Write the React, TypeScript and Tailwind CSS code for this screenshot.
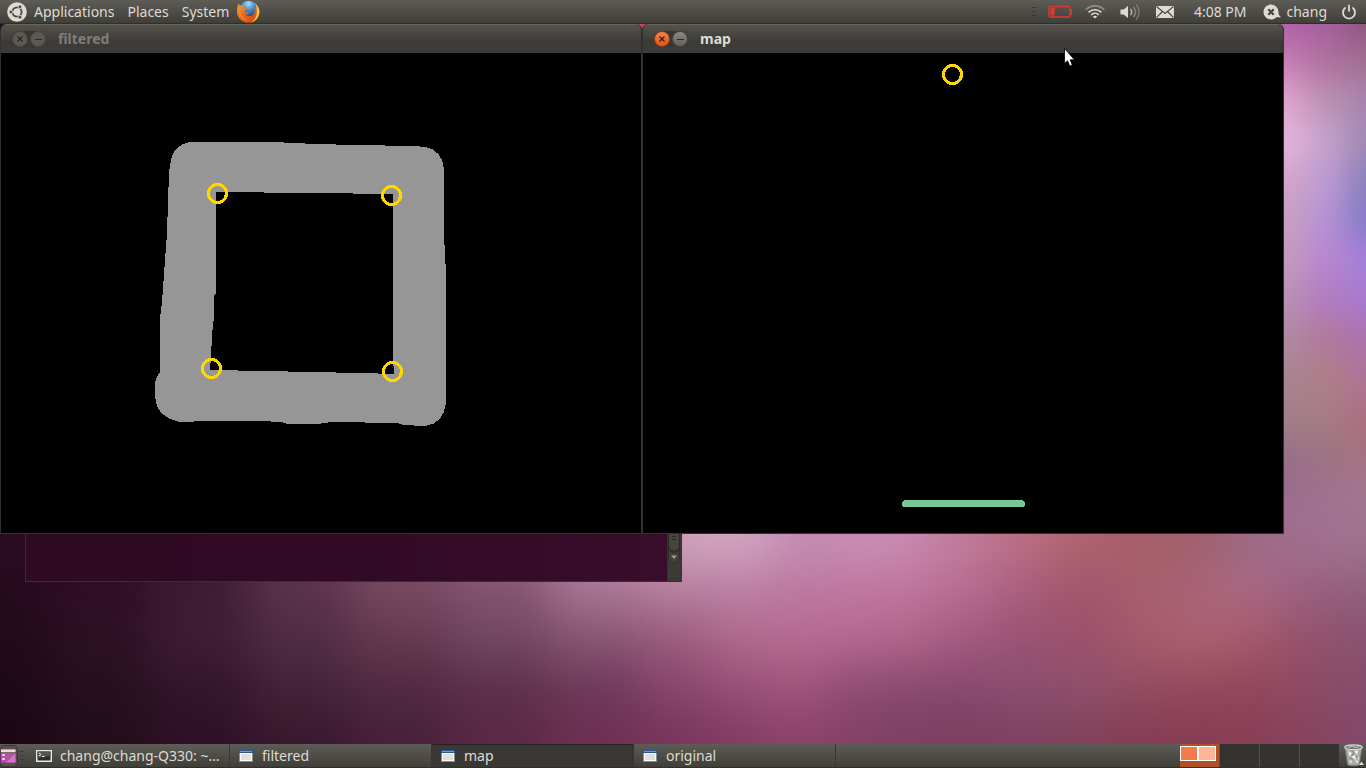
import type { ReactNode } from "react";

type Cell = { x: number; y: number; w: number; h: number; fill: string };

// Wallpaper colours, sampled at the crossing points of xs and ys
const lowerXs = [0, 100, 200, 300, 400, 500, 600, 680, 740, 800, 850, 900, 960, 1020, 1080, 1150, 1200, 1250, 1300, 1366];
const lowerYs = [540, 590, 640, 690, 740];
const lowerColors = [
  "2a0d20 300c24 3d1a33 60364d 805068 97657f c090ad cfa3bb d2a8c3 c48cb2 c88eb7 ca8cb3 c17d9c bb6f86 b0646d a55e68 a0606c 9c6a85 a0708f a07590",
  "260a1d 300d24 3d1c33 5a334b 754860 82526e a67391 b47f9e bd7ea2 bb78a0 bf77a0 c0769c b66d92 aa5f7d a0566c a65f70 a96477 ab6884 9c6080 90607a",
  "220a1a 2c1022 3f1d35 4f2c43 65394f 714762 875472 9c5a7c ae6a8c b76a90 b3688f b2658b a45a80 985273 9c506a a55b6c aa6272 a65a6a 955069 8a5270",
  "1e0717 260f1e 33142a 432337 4f2940 5c2f49 6c3857 87456a 964f75 a0547b 8d4b72 88496b 86486c 8b4e70 8e506c 914c60 96465a 90455a 8d4a63 854c6a",
  "1d0714 240d1a 2e1024 3a172c 46203a 5a2844 6f2f52 78345a 813c63 8b4268 844064 7c4063 7a3f5e 7d4060 804058 843a52 863c54 873e55 87425c 83486a",
];

const rightXs = [1284, 1325, 1366];
const rightYs = [24, 60, 100, 140, 180, 220, 260, 300, 340, 380, 420, 460, 500, 540];
const rightColors = [
  "b05fa8 a5609c 8f5582",
  "c67fb6 b0709f a0708f",
  "dfa6cd bc90b4 a884ae",
  "e6b6dc c6a2cc a288b4",
  "d4a5c8 bd9cd2 8b80bd",
  "c8a0c0 b692d6 857ac8",
  "c49cba b786d0 a580da",
  "ba90b6 b27cc0 a87ad0",
  "b08a9e b2789a ab72ac",
  "a58492 ae8088 b07294",
  "a08088 a57c84 ac7080",
  "986f88 9c7480 a8707e",
  "956a8a 9d7088 a67c90",
  "a0709a a07498 a07d95",
];

function toCells(xs: number[], ys: number[], colors: string[]): Cell[] {
  const edges = (points: number[]) =>
    points.map((p, i) => [
      i === 0 ? p - 60 : (points[i - 1] + p) / 2,
      i === points.length - 1 ? p + 80 : (points[i + 1] + p) / 2,
    ]);
  const xEdges = edges(xs);
  const yEdges = edges(ys);
  return colors.flatMap((row, r) =>
    row.split(" ").map((color, c) => ({
      x: xEdges[c][0],
      y: yEdges[r][0],
      w: xEdges[c][1] - xEdges[c][0] + 1,
      h: yEdges[r][1] - yEdges[r][0] + 1,
      fill: `#${color}`,
    }))
  );
}

const rightCells = toCells(rightXs, rightYs, rightColors);
const lowerCells = toCells(lowerXs, lowerYs, lowerColors);

function Wallpaper() {
  return (
    <svg
      className="absolute inset-0 h-full w-full"
      viewBox="0 24 1366 720"
      preserveAspectRatio="none"
      aria-hidden="true"
    >
      <defs>
        <filter id="soft" filterUnits="userSpaceOnUse" x="-100" y="-100" width="1600" height="1000" colorInterpolationFilters="sRGB">
          <feGaussianBlur stdDeviation="24" />
        </filter>
        <filter id="softRight" filterUnits="userSpaceOnUse" x="1100" y="-100" width="500" height="800" colorInterpolationFilters="sRGB">
          <feGaussianBlur stdDeviation="15" />
        </filter>
      </defs>
      <rect x="0" y="24" width="600" height="520" fill="#2f0a22" />
      <rect x="600" y="24" width="100" height="520" fill="#bf4c58" />
      <rect x="700" y="24" width="666" height="520" fill="#b060a0" />
      <g filter="url(#softRight)">
        {rightCells.map((c) => (
          <rect key={`${c.x}-${c.y}`} x={c.x} y={c.y} width={c.w} height={c.h} fill={c.fill} />
        ))}
      </g>
      <g filter="url(#soft)">
        {lowerCells.map((c) => (
          <rect key={`${c.x}-${c.y}`} x={c.x} y={c.y} width={c.w} height={c.h} fill={c.fill} />
        ))}
      </g>
    </svg>
  );
}

function UbuntuLogo() {
  return (
    <svg width="20" height="20" viewBox="0 0 20 20" aria-hidden="true">
      <circle cx="10" cy="10" r="9.8" fill="#dfdbd2" />
      <circle cx="10" cy="10" r="4.5" fill="none" stroke="#4a4943" strokeWidth="2" />
      <g stroke="#dfdbd2" strokeWidth="1">
        <path d="M10 10H2M10 10L14 3M10 10L14 17" />
      </g>
      <circle cx="10" cy="10" r="3.4" fill="#dfdbd2" />
      <g fill="#4a4943" stroke="#dfdbd2" strokeWidth="0.8">
        <circle cx="4" cy="10" r="1.9" />
        <circle cx="13" cy="4.8" r="1.9" />
        <circle cx="13" cy="15.2" r="1.9" />
      </g>
    </svg>
  );
}

function FirefoxLogo() {
  return (
    <svg width="24" height="24" viewBox="0 0 24 24" aria-hidden="true">
      <defs>
        <radialGradient id="globe" cx="0.5" cy="0.15" r="0.8">
          <stop offset="0" stopColor="#a9dcf5" />
          <stop offset="0.45" stopColor="#3a86cc" />
          <stop offset="1" stopColor="#12316f" />
        </radialGradient>
        <linearGradient id="fox" x1="0" y1="0" x2="1" y2="1">
          <stop offset="0" stopColor="#f3a23a" />
          <stop offset="0.5" stopColor="#e4661b" />
          <stop offset="1" stopColor="#c8400e" />
        </linearGradient>
      </defs>
      <circle cx="12.5" cy="10.5" r="9.8" fill="url(#globe)" />
      <path
        d="M2.6 3.2C2.9 4.6 3.5 5.4 4.4 5.6C5.6 5 7 5 8.4 5.6C7.5 6.4 7.4 7.1 7.8 7.8C8.9 7.7 10.2 7.9 10.9 8.5C10.6 9.5 9.1 10 8.7 10.6C8.6 11.4 9 12 9.7 12.3C10.9 12.5 12.3 11.8 13.5 12.5C13 14.1 11.3 14.7 9.4 14.5C11.3 16.8 15.4 16.8 17.3 14.5C19.2 12.3 19.2 8.6 17.4 6.2C19.3 7 20.2 8.3 20.6 9.8C20.9 7.3 20.1 4.8 18.3 3.1C21.7 5 23.6 8.6 23.4 12.4C23 18.6 18.2 23 12.2 22.8C5.8 22.6 1.1 17.8 1 11.8C1 8.3 1.7 5.4 2.6 3.2Z"
        fill="url(#fox)"
      />
      <path
        d="M20.6 9.8C20.9 7.3 20.1 4.8 18.3 3.1C21.7 5 23.6 8.6 23.4 12.4C23 17.4 19.7 21.2 15.4 22.3C19.6 19.4 21.5 14.5 20.6 9.8Z"
        fill="#f8c440"
      />
      <path d="M3 9C3.4 14.5 6.6 18.8 12 19.8C7.4 20.4 2.9 16.2 3 9Z" fill="#f6a53a" />
    </svg>
  );
}

function BatteryIcon() {
  return (
    <svg width="25" height="14" viewBox="0 0 25 14" aria-hidden="true">
      <rect x="1" y="1.5" width="21" height="10.5" rx="1.5" fill="none" stroke="#df382c" strokeWidth="1.4" />
      <rect x="2.5" y="3" width="4" height="7.5" fill="#df382c" />
      <path d="M22.5 4.5h1v5h-1" fill="none" stroke="#df382c" strokeWidth="1.2" />
    </svg>
  );
}

function WifiIcon() {
  return (
    <svg width="20" height="14" viewBox="0 0 20 14" fill="none" strokeWidth="1.6" aria-hidden="true">
      <path d="M0.8 4.8C6 -0.4 14 -0.4 19.2 4.8" stroke="#908e87" />
      <path d="M3.6 7.4C7.3 3.8 12.7 3.8 16.4 7.4" stroke="#dfdbd2" />
      <path d="M6.2 9.8C8.4 7.7 11.6 7.7 13.8 9.8" stroke="#dfdbd2" />
      <path d="M7.8 11.4C9.1 10.4 10.9 10.4 12.2 11.4L10 13.6Z" fill="#dfdbd2" />
    </svg>
  );
}

function VolumeIcon() {
  return (
    <svg width="20" height="18" viewBox="0 0 20 18" fill="none" strokeWidth="1.5" aria-hidden="true">
      <path d="M0.5 6.5h3.2L8 3v12L3.7 11.5H0.5Z" fill="#dfdbd2" />
      <path d="M10.5 6C12 7.8 12 10.2 10.5 12" stroke="#b5b2aa" />
      <path d="M13.5 4C16 7 16 11 13.5 14" stroke="#88867f" />
      <path d="M16.2 1.5C20 6 20 12 16.2 16.5" stroke="#7a7871" />
    </svg>
  );
}

function MailIcon() {
  return (
    <svg width="18" height="12" viewBox="0 0 18 12" aria-hidden="true">
      <rect width="18" height="12" fill="#dfdbd2" />
      <path d="M0.5 0.5L9 7.5L17.5 0.5M0.5 11.5L6.5 5.5M17.5 11.5L11.5 5.5" fill="none" stroke="#4a4943" strokeWidth="1.1" />
    </svg>
  );
}

function ChatIcon() {
  return (
    <svg width="18" height="16" viewBox="0 0 18 16" aria-hidden="true">
      <path d="M8 0.5A7.5 7.5 0 0 1 15.5 8C15.5 10 16 11.5 17.6 12.5V13.3H13.3A7.5 7.5 0 1 1 8 0.5Z" fill="#dfdbd2" />
      <path d="M5.3 5.3L10.7 10.7M10.7 5.3L5.3 10.7" stroke="#45443f" strokeWidth="2.2" />
    </svg>
  );
}

function PowerIcon() {
  return (
    <svg width="16" height="16" viewBox="0 0 16 16" fill="none" stroke="#dfdbd2" strokeWidth="1.8" aria-hidden="true">
      <path d="M4.6 3.6A6 6 0 1 0 11.4 3.6M8 0.8V7.5" />
    </svg>
  );
}

function Grip() {
  return (
    <svg width="4" height="9" viewBox="0 0 4 9" shapeRendering="crispEdges" aria-hidden="true">
      <path d="M0 0.5H4M0 4.5H4M0 8.5H4" stroke="#3a3935" />
    </svg>
  );
}

function TerminalIcon() {
  return (
    <svg width="16" height="12" viewBox="0 0 16 12" aria-hidden="true">
      <rect width="16" height="12" fill="#e9e9e6" />
      <rect x="1.5" y="1.5" width="13" height="9" fill="#2c2e2d" />
      <path d="M1.5 1.5h13v4L1.5 8Z" fill="#555755" />
      <path d="M3 3L5 4.5L3 6M6 6.5H8.5" fill="none" stroke="#f2f2f2" />
    </svg>
  );
}

function WindowIcon() {
  return (
    <svg width="16" height="12" viewBox="-1 0 16 12" shapeRendering="crispEdges" aria-hidden="true">
      <rect width="14" height="12" fill="#8c8d89" />
      <rect width="14" height="3" fill="#2a5496" />
      <rect x="1" y="1" width="12" height="1" fill="#6d9ad2" />
      <rect x="1" y="3" width="12" height="8" fill="#fafaf8" />
      <rect x="2" y="4" width="10" height="6" fill="#dfe0dc" />
    </svg>
  );
}

function ShowDesktopIcon() {
  return (
    <svg width="18" height="22" viewBox="0 0 18 22" aria-hidden="true">
      <rect x="0.5" y="0.5" width="17" height="21" rx="4" fill="#55544e" stroke="#353430" />
      <rect x="1" y="4" width="15" height="14" fill="#b650ad" />
      <rect x="1" y="4" width="15" height="3" fill="#e8e4c8" />
      <path d="M1 7.5H16" stroke="#77705c" />
      <rect x="2.5" y="9" width="2" height="2" fill="#fff" />
      <rect x="2.5" y="13" width="2" height="2" fill="#fff" />
      <path d="M6 17.5L16 8V18H6Z" fill="#cd78c6" />
      <rect x="0.5" y="4" width="15.5" height="14" fill="none" stroke="#7d2f78" strokeWidth="0.8" />
    </svg>
  );
}

function TrashIcon() {
  return (
    <svg width="22" height="23" viewBox="0 0 22 23" aria-hidden="true">
      <path d="M2 3.5L4.5 20.5C6 22.3 15 22.3 16.5 20.5L19 3.5Z" fill="#a9aaa7" stroke="#70716e" strokeWidth="0.8" />
      <path d="M5 7L9 9L6.5 13ZM11 7L15.5 6.5L14 11ZM8 13L12 11L13 16ZM6 16L9 17L8 20ZM14 14L16 13L15 19L12.5 18Z" fill="#eeeeec" />
      <path d="M9.5 6L11 9L8.5 12M13 12L15 17M6 14L10 15" stroke="#777875" fill="none" strokeWidth="0.8" />
      <ellipse cx="10.5" cy="3.3" rx="8.8" ry="2.4" fill="#777875" stroke="#d8d9d6" strokeWidth="1.2" />
      <path d="M5 3.5L9 2L13 3.5L16 2.5" stroke="#c8c9c6" fill="none" />
      <path d="M16 21L18.5 17.5L21 21Z" fill="#dededb" />
    </svg>
  );
}

type WindowProps = { title: string; active?: boolean; children: ReactNode };

function Window({ title, active, children }: WindowProps) {
  return (
    <section className="w-[642px] shrink-0 overflow-hidden rounded-t-md border border-t-0 border-[#32312d] bg-black">
      <header className="flex h-[29px] items-center border-t border-[#65645d] bg-linear-to-b from-[#53524b] to-[#3c3b37] to-60% pl-[11px]">
        <div className="flex gap-[2px] rounded-full bg-[#383733]">
          <button
            aria-label={`Close ${title}`}
            className={
              active
                ? "flex size-4 items-center justify-center rounded-full border border-[#8f3d1b] bg-linear-to-b from-[#f5834f] to-[#e25310]"
                : "flex size-4 items-center justify-center rounded-full border border-[#494842] bg-[#5a5953]"
            }
          >
            <svg width="6" height="6" viewBox="0 0 6 6" aria-hidden="true">
              <path d="M0.5 0.5L5.5 5.5M5.5 0.5L0.5 5.5" stroke="#30201a" strokeWidth="1.2" />
            </svg>
          </button>
          <button
            aria-label={`Minimize ${title}`}
            className={
              active
                ? "flex size-4 items-center justify-center rounded-full border border-[#454440] bg-linear-to-b from-[#8b8a82] to-[#62615a]"
                : "flex size-4 items-center justify-center rounded-full border border-[#494842] bg-[#5a5953]"
            }
          >
            <span className="h-px w-[7px] bg-[#2b2a27]" />
          </button>
        </div>
        <h2 className={active ? "pl-3 text-sm font-bold text-[#dfdbd2]" : "pl-3 text-sm font-bold text-[#807d78]"}>
          {title}
        </h2>
      </header>
      {children}
    </section>
  );
}

const corners = [
  [216.5, 140.5],
  [390.5, 142.5],
  [210.5, 315.5],
  [391.5, 318.5],
];

function FilteredView() {
  return (
    <svg className="block" width="640" height="480" viewBox="0 0 640 480" shapeRendering="crispEdges" role="img" aria-label="Filtered frame">
      <path
        fill="#969696"
        fillRule="evenodd"
        d="M189 89L272 89L315 91L355 92L413 93L424 94C436 96 442 104 443 116L443 182L445 220L445 350C443 364 437 371 424 373L402 372L396 370L331 369L316 371L286 371L281 369L259 368L207 368L179 369C163 366 155 358 154 344L154 330Q155 323 159 320L159 265L161 249L166 180L168 119L170 107Q173 92 189 89Z
           M215 139L311 140L392 141L392 304L393 321L360 320L309 319L265 318L209 317L210 304L211 282L213 264L213 242L215 240Z"
      />
      {corners.map(([cx, cy]) => (
        <circle key={`${cx}-${cy}`} cx={cx} cy={cy} r="9" fill="none" stroke="#ffd700" strokeWidth="3.2" />
      ))}
    </svg>
  );
}

function MapView() {
  return (
    <svg className="block" width="640" height="480" viewBox="0 0 640 480" shapeRendering="crispEdges" role="img" aria-label="Map">
      <circle cx="309.5" cy="21.5" r="9" fill="none" stroke="#ffd700" strokeWidth="3.2" />
      <rect x="259" y="447" width="123" height="7" rx="3.5" fill="#78c797" />
    </svg>
  );
}

function TerminalWindow() {
  return (
    <section
      aria-label="Terminal"
      className="absolute top-[300px] left-[25px] flex h-[258px] w-[657px] border border-[#32312d] bg-linear-to-r from-[#2f0a23] via-[#310a25] to-[#380e2b]"
    >
      <div className="flex-1" />
      <svg width="14" height="256" viewBox="0 0 14 256" aria-hidden="true">
        <rect width="14" height="256" fill="#3c3b37" />
        <path d="M0.5 0V256" stroke="#33322e" />
        <rect x="1.5" y="0" width="11" height="226" rx="5" fill="#45443f" stroke="#292825" />
        <path d="M5 211.5h4M5 214.5h4" stroke="#292825" />
        <path d="M1.5 222V233A5.5 5.5 0 0 0 12.5 233V222A5.5 5.5 0 0 1 1.5 222Z" fill="#403f3a" stroke="#2f2e2a" />
        <path d="M4 230.5h6l-3 3.5Z" fill="#a09d96" />
        <path d="M11 245.5h2M8 249.5h5M5 253.5h8" stroke="#2d2c29" strokeDasharray="1 2" />
      </svg>
    </section>
  );
}

const menus = ["Applications", "Places", "System"];

const tasks = [
  { title: "chang@chang-Q330: ~…", icon: <TerminalIcon /> },
  { title: "filtered", icon: <WindowIcon /> },
  { title: "map", icon: <WindowIcon />, active: true },
  { title: "original", icon: <WindowIcon /> },
];

export default function App() {
  return (
    <div className="flex h-screen flex-col overflow-hidden bg-[#2f0a22] font-['Noto_Sans',sans-serif] text-sm leading-5 text-[#dfdbd2]">
      <header className="flex h-6 shrink-0 items-center justify-between border-b border-[#302f2b] bg-linear-to-b from-[#5d5c56] to-[#3f3e39] pr-[9px] pl-[7px]">
        <nav className="flex items-center gap-[7px]">
          <UbuntuLogo />
          <div className="flex gap-[13px]">
            {menus.map((menu) => (
              <button key={menu}>{menu}</button>
            ))}
          </div>
          <button aria-label="Firefox">
            <FirefoxLogo />
          </button>
        </nav>
        <div className="flex items-center">
          <Grip />
          <button aria-label="Battery" className="ml-3">
            <BatteryIcon />
          </button>
          <button aria-label="Network" className="ml-3">
            <WifiIcon />
          </button>
          <button aria-label="Volume" className="ml-[15px]">
            <VolumeIcon />
          </button>
          <button aria-label="Messages" className="ml-4">
            <MailIcon />
          </button>
          <button className="ml-5">4:08 PM</button>
          <button className="ml-4 flex items-center gap-[6px]">
            <ChatIcon />
            chang
          </button>
          <button aria-label="Shut down" className="ml-[14px]">
            <PowerIcon />
          </button>
        </div>
      </header>

      <main className="relative flex-1 overflow-hidden">
        <Wallpaper />
        <TerminalWindow />
        <div className="relative flex">
          <Window title="filtered">
            <FilteredView />
          </Window>
          <Window title="map" active>
            <MapView />
          </Window>
        </div>
        {/* Mouse pointer */}
        <svg className="absolute top-6 left-[1064px]" width="12" height="19" viewBox="0 0 12 19" aria-hidden="true">
          <path d="M0.5 0.5V15.5L3.5 12.8L5.8 18L8.3 17L6.2 11.8H10.5Z" fill="#fff" stroke="#000" strokeWidth="0.8" />
        </svg>
      </main>

      <footer className="flex h-6 shrink-0 items-stretch border-b border-[#302f2b] bg-linear-to-b from-[#5d5c56] to-[#3f3e39]">
        <button aria-label="Show desktop" className="flex items-center">
          <ShowDesktopIcon />
        </button>
        <div className="flex w-[10px] items-center justify-end pr-1">
          <Grip />
        </div>
        <div className="flex flex-1">
          {tasks.map((task) => (
            <button
              key={task.title}
              className={
                task.active
                  ? "flex w-[202px] items-center gap-2 border-r border-[#383733] bg-[#393834] pl-2 inset-shadow-xs inset-shadow-black/40"
                  : "flex w-[202px] items-center gap-2 border-r border-[#383733] pl-2"
              }
            >
              {task.icon}
              {task.title}
            </button>
          ))}
        </div>
        <div className="flex items-stretch">
          <button aria-label="Workspace 1" className="flex w-[39px] items-start bg-[#ac5229] pt-[2px]">
            <span className="flex h-[15px] w-9 gap-[2px] bg-white p-px">
              <span className="flex-1 bg-[#f27b49]" />
              <span className="flex-1 bg-[#ffb397]" />
            </span>
          </button>
          <button aria-label="Workspace 2" className="w-10 border-l border-[#52514b] bg-[#343330]" />
          <button aria-label="Workspace 3" className="w-10 border-l border-[#52514b] bg-[#343330]" />
          <button aria-label="Workspace 4" className="w-10 border-l border-[#52514b] bg-[#343330]" />
        </div>
        <button aria-label="Trash" className="flex items-center pr-px pl-1">
          <TrashIcon />
        </button>
      </footer>
    </div>
  );
}
